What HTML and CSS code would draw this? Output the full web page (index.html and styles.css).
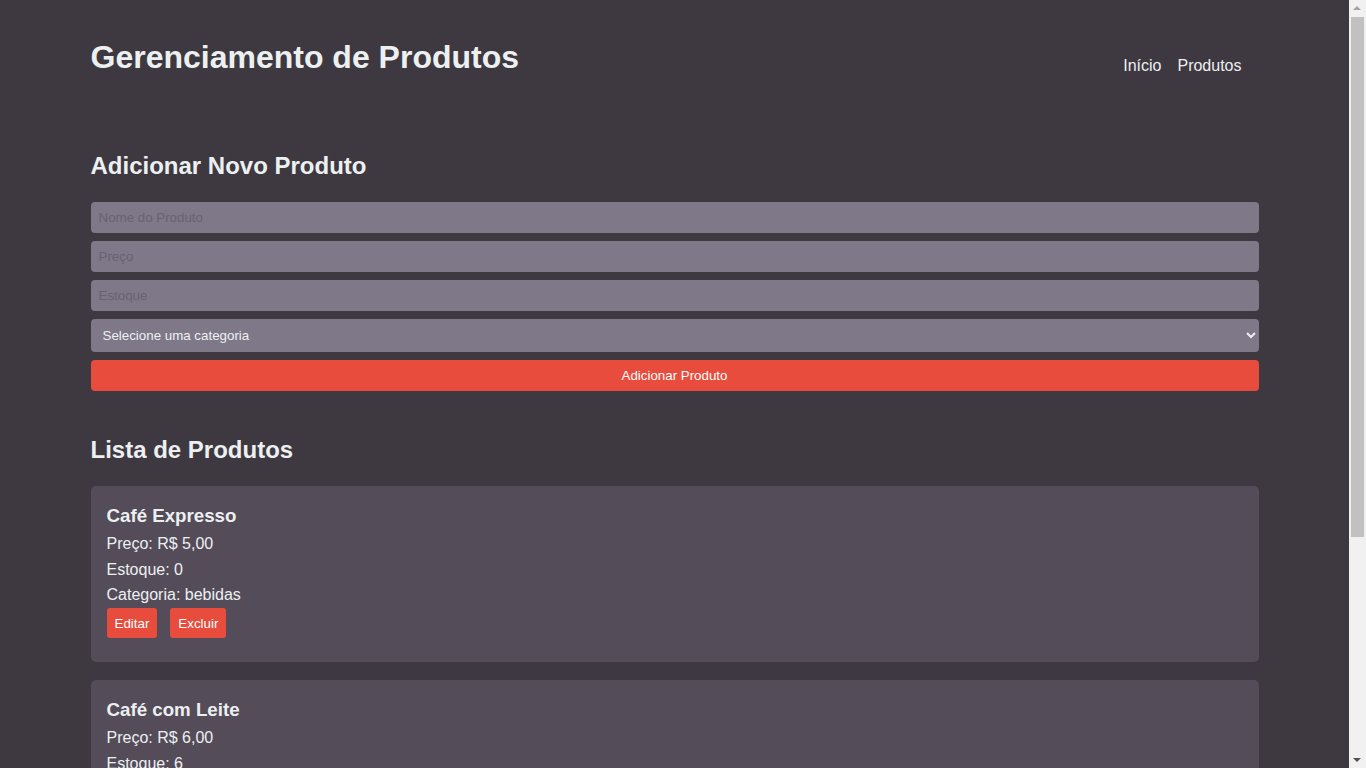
FILE: index.html
```html
<!DOCTYPE html>
<html lang="pt-BR">
<head>
<meta charset="utf-8">
<title>Gerenciamento de Produtos</title>
<link rel="stylesheet" href="styles.css">
</head>
<body>
<div class="container">
  <header class="header">
    <h1 class="title">Gerenciamento de Produtos</h1>
    <nav class="nav">
      <a href="#" class="nav-link">Início</a>
      <a href="#" class="nav-link">Produtos</a>
    </nav>
  </header>

  <section class="form-section">
    <h2 class="section-title">Adicionar Novo Produto</h2>
    <form class="product-form">
      <input class="field" type="text" placeholder="Nome do Produto">
      <input class="field" type="text" placeholder="Preço">
      <input class="field" type="text" placeholder="Estoque">
      <select class="field select">
        <option>Selecione uma categoria</option>
        <option>bebidas</option>
        <option>lanches</option>
      </select>
      <button type="button" class="btn-primary">Adicionar Produto</button>
    </form>
  </section>

  <section class="list-section">
    <h2 class="section-title">Lista de Produtos</h2>
    <div class="product-list">
      <div class="card">
        <h3 class="card-title">Café Expresso</h3>
        <p class="card-line">Preço: R$ 5,00</p>
        <p class="card-line">Estoque: 0</p>
        <p class="card-line">Categoria: bebidas</p>
        <div class="actions">
          <button type="button" class="btn-small">Editar</button>
          <button type="button" class="btn-small">Excluir</button>
        </div>
      </div>
      <div class="card">
        <h3 class="card-title">Café com Leite</h3>
        <p class="card-line">Preço: R$ 6,00</p>
        <p class="card-line">Estoque: 6</p>
        <p class="card-line">Categoria: bebidas</p>
        <div class="actions">
          <button type="button" class="btn-small">Editar</button>
          <button type="button" class="btn-small">Excluir</button>
        </div>
      </div>
      <div class="card">
        <h3 class="card-title">Pão de Queijo</h3>
        <p class="card-line">Preço: R$ 4,50</p>
        <p class="card-line">Estoque: 12</p>
        <p class="card-line">Categoria: lanches</p>
        <div class="actions">
          <button type="button" class="btn-small">Editar</button>
          <button type="button" class="btn-small">Excluir</button>
        </div>
      </div>
    </div>
  </section>
</div>
<div class="scrollbar" aria-hidden="true">
  <span class="sb-arrow sb-up"></span>
  <span class="sb-thumb"></span>
  <span class="sb-arrow sb-down"></span>
</div>
</body>
</html>
```

FILE: styles.css
```css
* { box-sizing: border-box; }

html, body {
  margin: 0;
  padding: 0;
  background: #3e3840;
  color: #ecf0f1;
  font-family: "Liberation Sans", Arial, sans-serif;
}

body {
  padding-right: 17px;
}

.container {
  max-width: 1200px;
  margin: 0 auto;
  padding: 39px 16px 78px;
}

.header {
  display: flex;
  justify-content: space-between;
  align-items: flex-start;
}

.title {
  margin: 0;
  font-size: 32px;
  line-height: 37px;
  font-weight: bold;
  color: #ecf0f1;
}

.nav {
  margin-top: 18px;
  padding-right: 17px;
  display: flex;
  gap: 16px;
}

.nav-link {
  color: #ecf0f1;
  text-decoration: none;
  font-size: 16px;
  line-height: 18px;
}

.form-section {
  margin-top: 76px;
}

.section-title {
  margin: 0 0 22px;
  font-size: 24px;
  line-height: 28px;
  font-weight: bold;
  color: #ecf0f1;
}

.product-form {
  display: flex;
  flex-direction: column;
  gap: 8px;
}

.field {
  display: block;
  width: 100%;
  height: 31px;
  padding: 8px;
  border: none;
  border-radius: 4px;
  background: #7f7889;
  color: #ecf0f1;
  font-family: "Liberation Sans", Arial, sans-serif;
  font-size: 13.33px;
  outline: none;
}

.field::placeholder {
  color: #696271;
}

.select {
  height: 33px;
  padding: 0 4px 0 8px;
}

.btn-primary {
  height: 31px;
  width: 100%;
  border: none;
  border-radius: 4px;
  background: #e74c3c;
  color: #ffffff;
  font-family: "Liberation Sans", Arial, sans-serif;
  font-size: 13.33px;
  cursor: pointer;
}

.list-section {
  margin-top: 45px;
}

.product-list {
  display: flex;
  flex-direction: column;
  gap: 18px;
}

.card {
  background: #544c59;
  border-radius: 5px;
  padding: 15px 16px 24px;
}

.card-title {
  margin: 0 0 1px;
  font-size: 18.72px;
  line-height: 29px;
  font-weight: bold;
  color: #ecf0f1;
}

.card-line {
  margin: 0;
  font-size: 16px;
  line-height: 25.5px;
  color: #ecf0f1;
}

.actions {
  display: flex;
  gap: 13px;
  margin-top: 0.5px;
}

.btn-small {
  height: 30px;
  padding: 0 8px;
  border: none;
  border-radius: 3px;
  background: #e74c3c;
  color: #ffffff;
  font-family: "Liberation Sans", Arial, sans-serif;
  font-size: 13.33px;
  cursor: pointer;
}

/* imitation of the classic browser scrollbar in the reference */
.scrollbar {
  position: fixed;
  top: 0;
  right: 0;
  width: 17px;
  height: 100vh;
  background: #f1f1f1;
}

.sb-thumb {
  position: absolute;
  top: 17px;
  left: 2px;
  width: 13px;
  height: 520px;
  background: #c1c1c1;
}

.sb-arrow {
  position: absolute;
  left: 4px;
  width: 0;
  height: 0;
  border-left: 4.5px solid transparent;
  border-right: 4.5px solid transparent;
}

.sb-up {
  top: 6px;
  border-bottom: 4px solid #a3a3a3;
}

.sb-down {
  bottom: 6px;
  border-top: 4px solid #505050;
}
```
